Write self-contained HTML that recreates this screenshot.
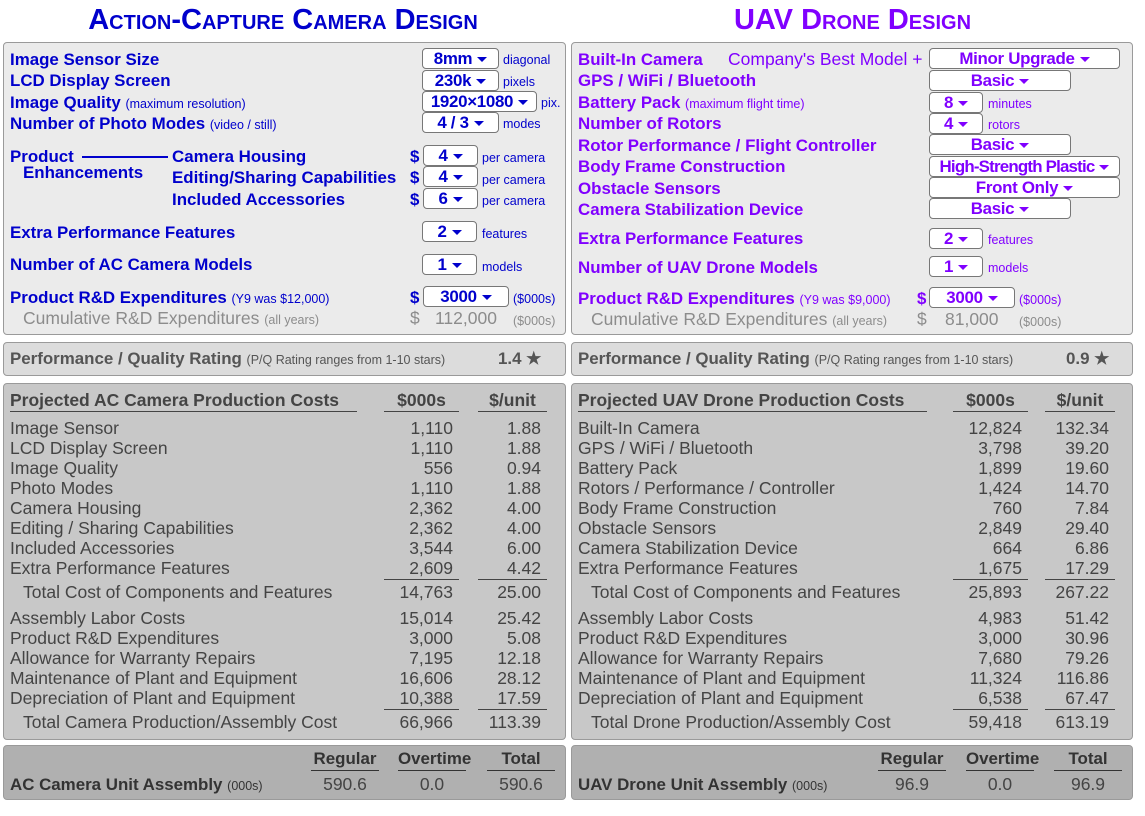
<!DOCTYPE html>
<html><head><meta charset="utf-8"><style>
*{margin:0;padding:0;box-sizing:border-box}
body{width:1145px;height:816px;background:#fff;font-family:"Liberation Sans",Arial,sans-serif;position:relative;overflow:hidden}
.a{position:absolute;white-space:nowrap;line-height:20px}
.p{position:absolute;border:1px solid #9a9a9a;border-radius:4px}
.t{font-weight:bold;font-variant:small-caps;font-size:29px;line-height:30px;text-align:center}
.b{color:#0000cc}.v{color:#8000ff}
.l{font-weight:bold;font-size:16.9px;top:1px}
.s{font-size:12.5px;font-weight:normal}
.dd{position:absolute;height:21px;background:#fff;border:1px solid #777;border-radius:4px;font-weight:bold;font-size:16.9px;text-align:center;line-height:19px;letter-spacing:-0.3px;overflow:hidden;white-space:nowrap}
.dd:after{content:"";display:inline-block;margin-left:5px;vertical-align:middle;border-left:5px solid transparent;border-right:5px solid transparent;border-top:5px solid currentColor}
.g{color:#8c8c8c;font-size:17.5px}
.c{color:#444;font-size:17.5px}
.r{text-align:right}
.hl{position:absolute;height:1px;background:#444}
.ctr{text-align:center}
</style></head><body>
<div class="a t b" style="left:0;width:566px;top:5px">Action-Capture Camera Design</div>
<div class="a t v" style="left:571px;width:563px;top:5px">UAV Drone Design</div>

<div class="p" style="left:3px;top:42px;width:563px;height:293px;background:#ebebeb"></div>
<div class="a b l" style="left:10px;top:50px">Image Sensor Size</div>
<div class="a b l" style="left:10px;top:71px">LCD Display Screen</div>
<div class="a b l" style="left:10px;top:93px">Image Quality <span class="s">(maximum resolution)</span></div>
<div class="a b l" style="left:10px;top:114px">Number of Photo Modes <span class="s">(video / still)</span></div>
<div class="a b l" style="left:10px;top:147px">Product</div>
<div class="a" style="left:82px;top:156px;width:86px;height:2px;background:#0000cc"></div>
<div class="a b l" style="left:23px;top:163px">Enhancements</div>
<div class="a b l" style="left:172px;top:147px">Camera Housing</div>
<div class="a b l" style="left:172px;top:168px">Editing/Sharing Capabilities</div>
<div class="a b l" style="left:172px;top:190px">Included Accessories</div>
<div class="a b l" style="left:10px;top:223px">Extra Performance Features</div>
<div class="a b l" style="left:10px;top:255px">Number of AC Camera Models</div>
<div class="a b l" style="left:10px;top:288px">Product R&amp;D Expenditures <span class="s">(Y9 was $12,000)</span></div>
<div class="a g" style="left:23px;top:308px">Cumulative R&amp;D Expenditures <span class="s">(all years)</span></div>

<div class="dd b" style="left:422px;top:48px;width:77px">8mm</div><div class="a b s" style="left:503px;top:50px">diagonal</div>
<div class="dd b" style="left:422px;top:70px;width:77px">230k</div><div class="a b s" style="left:503px;top:72px">pixels</div>
<div class="dd b" style="left:422px;top:91px;width:115px">1920×1080</div><div class="a b s" style="left:541px;top:93px">pix.</div>
<div class="dd b" style="left:422px;top:112px;width:77px">4 / 3</div><div class="a b s" style="left:503px;top:114px">modes</div>
<div class="a b l" style="left:410px;top:147px">$</div><div class="dd b" style="left:423px;top:145px;width:55px">4</div><div class="a b s" style="left:482px;top:148px">per camera</div>
<div class="a b l" style="left:410px;top:168px">$</div><div class="dd b" style="left:423px;top:166px;width:55px">4</div><div class="a b s" style="left:482px;top:170px">per camera</div>
<div class="a b l" style="left:410px;top:190px">$</div><div class="dd b" style="left:423px;top:188px;width:55px">6</div><div class="a b s" style="left:482px;top:191px">per camera</div>
<div class="dd b" style="left:422px;top:221px;width:55px">2</div><div class="a b s" style="left:482px;top:224px">features</div>
<div class="dd b" style="left:422px;top:254px;width:55px">1</div><div class="a b s" style="left:482px;top:257px">models</div>
<div class="a b l" style="left:410px;top:288px">$</div><div class="dd b" style="left:423px;top:286px;width:86px">3000</div><div class="a b s" style="left:513px;top:289px">($000s)</div>
<div class="a g" style="left:410px;top:308px">$</div><div class="a g" style="left:435px;top:308px">112,000</div><div class="a s" style="left:513px;top:311px;color:#8c8c8c">($000s)</div>

<div class="p" style="left:571px;top:42px;width:562px;height:293px;background:#ebebeb"></div>
<div class="a v l" style="left:578px;top:50px">Built-In Camera</div>
<div class="a v" style="left:728px;top:49px;font-size:17.5px">Company's Best Model +</div>
<div class="a v l" style="left:578px;top:71px">GPS / WiFi / Bluetooth</div>
<div class="a v l" style="left:578px;top:93px">Battery Pack <span class="s">(maximum flight time)</span></div>
<div class="a v l" style="left:578px;top:114px">Number of Rotors</div>
<div class="a v l" style="left:578px;top:136px">Rotor Performance / Flight Controller</div>
<div class="a v l" style="left:578px;top:157px">Body Frame Construction</div>
<div class="a v l" style="left:578px;top:179px">Obstacle Sensors</div>
<div class="a v l" style="left:578px;top:200px">Camera Stabilization Device</div>
<div class="a v l" style="left:578px;top:229px">Extra Performance Features</div>
<div class="a v l" style="left:578px;top:258px">Number of UAV Drone Models</div>
<div class="a v l" style="left:578px;top:289px">Product R&amp;D Expenditures <span class="s">(Y9 was $9,000)</span></div>
<div class="a g" style="left:591px;top:309px">Cumulative R&amp;D Expenditures <span class="s">(all years)</span></div>

<div class="dd v" style="left:929px;top:48px;width:191px">Minor Upgrade</div>
<div class="dd v" style="left:929px;top:70px;width:142px">Basic</div>
<div class="dd v" style="left:929px;top:92px;width:54px">8</div><div class="a v s" style="left:988px;top:94px">minutes</div>
<div class="dd v" style="left:929px;top:113px;width:54px">4</div><div class="a v s" style="left:988px;top:115px">rotors</div>
<div class="dd v" style="left:929px;top:134px;width:142px">Basic</div>
<div class="dd v" style="left:929px;top:156px;width:191px;letter-spacing:-0.8px">High-Strength Plastic</div>
<div class="dd v" style="left:929px;top:177px;width:191px">Front Only</div>
<div class="dd v" style="left:929px;top:198px;width:142px">Basic</div>
<div class="dd v" style="left:929px;top:228px;width:54px">2</div><div class="a v s" style="left:988px;top:230px">features</div>
<div class="dd v" style="left:929px;top:256px;width:54px">1</div><div class="a v s" style="left:988px;top:258px">models</div>
<div class="a v l" style="left:917px;top:289px">$</div><div class="dd v" style="left:929px;top:287px;width:86px">3000</div><div class="a v s" style="left:1019px;top:290px">($000s)</div>
<div class="a g" style="left:917px;top:309px">$</div><div class="a g" style="left:945px;top:309px">81,000</div><div class="a s" style="left:1019px;top:312px;color:#8c8c8c">($000s)</div>

<div class="p" style="left:3px;top:342px;width:563px;height:34px;background:#dcdcdc"></div>
<div class="a l" style="left:10px;top:349px;color:#555">Performance / Quality Rating <span class="s">(P/Q Rating ranges from 1-10 stars)</span></div>
<div class="a l" style="left:498px;top:349px;color:#555">1.4 ★</div>
<div class="p" style="left:571px;top:342px;width:562px;height:34px;background:#dcdcdc"></div>
<div class="a l" style="left:578px;top:349px;color:#555">Performance / Quality Rating <span class="s">(P/Q Rating ranges from 1-10 stars)</span></div>
<div class="a l" style="left:1066px;top:349px;color:#555">0.9 ★</div>

<div class="p" style="left:3px;top:383px;width:563px;height:357px;background:#c8c8c8"></div>
<div class="p" style="left:571px;top:383px;width:562px;height:357px;background:#c8c8c8"></div>

<div class="p" style="left:3px;top:745px;width:563px;height:55px;background:#b0b0b0"></div>
<div class="p" style="left:571px;top:745px;width:562px;height:55px;background:#b0b0b0"></div>
<div class="a l" style="left:10px;top:775px;color:#333">AC Camera Unit Assembly <span class="s">(000s)</span></div>
<div class="a l" style="left:578px;top:775px;color:#333">UAV Drone Unit Assembly <span class="s">(000s)</span></div>

<script>
function add(h){document.body.insertAdjacentHTML('beforeend',h)}
function table(x0,hx,cols,title,rows1,tot1,rows2,tot2){
 add(`<div class="a l c" style="left:${x0}px;top:390px">${title}</div><div class="hl" style="left:${x0}px;top:411px;width:${hx}px"></div>`);
 add(`<div class="a l c ctr" style="left:${cols[0][0]}px;width:${cols[0][1]-cols[0][0]}px;top:390px">$000s</div><div class="hl" style="left:${cols[0][0]}px;top:411px;width:${cols[0][1]-cols[0][0]}px"></div>`);
 add(`<div class="a l c ctr" style="left:${cols[1][0]}px;width:${cols[1][1]-cols[1][0]}px;top:390px">$/unit</div><div class="hl" style="left:${cols[1][0]}px;top:411px;width:${cols[1][1]-cols[1][0]}px"></div>`);
 function row(y,r,ind){add(`<div class="a c" style="left:${x0+(ind?13:0)}px;top:${y}px">${r[0]}</div><div class="a c r" style="left:${cols[0][0]}px;width:${cols[0][1]-cols[0][0]-6}px;top:${y}px">${r[1]}</div><div class="a c r" style="left:${cols[1][0]}px;width:${cols[1][1]-cols[1][0]-6}px;top:${y}px">${r[2]}</div>`)}
 let y=418;rows1.forEach(r=>{row(y,r);y+=20});
 add(`<div class="hl" style="left:${cols[0][0]}px;top:579px;width:${cols[0][1]-cols[0][0]}px"></div><div class="hl" style="left:${cols[1][0]}px;top:579px;width:${cols[1][1]-cols[1][0]}px"></div>`);
 row(582,tot1,1);
 y=608;rows2.forEach(r=>{row(y,r);y+=20});
 add(`<div class="hl" style="left:${cols[0][0]}px;top:709px;width:${cols[0][1]-cols[0][0]}px"></div><div class="hl" style="left:${cols[1][0]}px;top:709px;width:${cols[1][1]-cols[1][0]}px"></div>`);
 row(712,tot2,1);
}
table(10,347,[[384,459],[478,547]],"Projected AC Camera Production Costs",
[["Image Sensor","1,110","1.88"],["LCD Display Screen","1,110","1.88"],["Image Quality","556","0.94"],["Photo Modes","1,110","1.88"],["Camera Housing","2,362","4.00"],["Editing / Sharing Capabilities","2,362","4.00"],["Included Accessories","3,544","6.00"],["Extra Performance Features","2,609","4.42"]],
["Total Cost of Components and Features","14,763","25.00"],
[["Assembly Labor Costs","15,014","25.42"],["Product R&amp;D Expenditures","3,000","5.08"],["Allowance for Warranty Repairs","7,195","12.18"],["Maintenance of Plant and Equipment","16,606","28.12"],["Depreciation of Plant and Equipment","10,388","17.59"]],
["Total Camera Production/Assembly Cost","66,966","113.39"]);
table(578,349,[[953,1028],[1045,1115]],"Projected UAV Drone Production Costs",
[["Built-In Camera","12,824","132.34"],["GPS / WiFi / Bluetooth","3,798","39.20"],["Battery Pack","1,899","19.60"],["Rotors / Performance / Controller","1,424","14.70"],["Body Frame Construction","760","7.84"],["Obstacle Sensors","2,849","29.40"],["Camera Stabilization Device","664","6.86"],["Extra Performance Features","1,675","17.29"]],
["Total Cost of Components and Features","25,893","267.22"],
[["Assembly Labor Costs","4,983","51.42"],["Product R&amp;D Expenditures","3,000","30.96"],["Allowance for Warranty Repairs","7,680","79.26"],["Maintenance of Plant and Equipment","11,324","116.86"],["Depreciation of Plant and Equipment","6,538","67.47"]],
["Total Drone Production/Assembly Cost","59,418","613.19"]);
function asm(cs,vals){["Regular","Overtime","Total"].forEach((h,i)=>{let c=cs[i];add(`<div class="a l ctr" style="left:${c-34}px;width:68px;top:749px;color:#333">${h}</div><div class="hl" style="left:${c-34}px;top:770px;width:68px;background:#333"></div><div class="a c ctr" style="left:${c-34}px;width:68px;top:774px">${vals[i]}</div>`)})}
asm([345,432,521],["590.6","0.0","590.6"]);
asm([912,1000,1088],["96.9","0.0","96.9"]);
</script>
</body></html>
